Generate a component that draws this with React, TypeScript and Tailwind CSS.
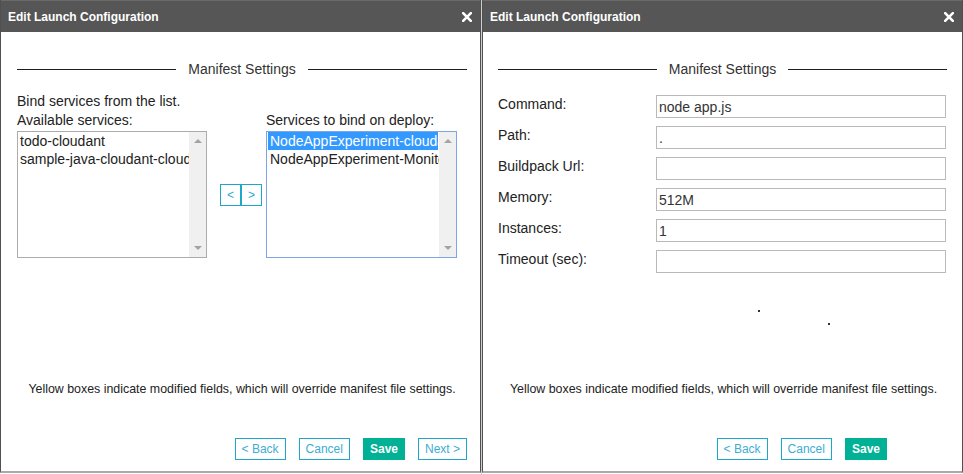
import type { ReactNode } from 'react'

const font = "font-['Liberation_Sans',Arial,sans-serif]"

function CloseIcon() {
  return (
    <svg width="10" height="10" viewBox="0 0 10 10" className="shrink-0">
      <path d="M1.2 1.2 L8.8 8.8 M8.8 1.2 L1.2 8.8" stroke="#fff" strokeWidth="2.6" strokeLinecap="square" />
    </svg>
  )
}

function Dialog({ children, bodyClass }: { children: ReactNode; bodyClass: string }) {
  return (
    <div className="relative flex h-[473px] w-[481px] shrink-0 flex-col border-x border-b-2 border-x-[#505050] border-b-[#a9a9a9] bg-white">
      <div className="flex h-[32px] shrink-0 items-center justify-between border-t border-[#6a6a6a] bg-[#565656] pl-[7px] pr-[8px]">
        <span className="text-[12px] font-bold text-white">Edit Launch Configuration</span>
        <CloseIcon />
      </div>
      <div className={`flex flex-1 flex-col ${bodyClass}`}>{children}</div>
    </div>
  )
}

function Legend({ className = '' }: { className?: string }) {
  return (
    <div className={`mt-[29px] flex h-4 items-center ${className}`}>
      <div className="h-px flex-1 bg-[#1e1e1e]" />
      <span className="px-[12px] text-[14px] leading-4 text-[#333]">Manifest Settings</span>
      <div className="h-px flex-1 bg-[#1e1e1e]" />
    </div>
  )
}

function ScrollTrack() {
  return (
    <div className="flex w-[17px] shrink-0 flex-col items-center justify-between bg-[#f0f0f0] py-[7px]">
      <span className="h-0 w-0 border-x-[4px] border-b-[4px] border-x-transparent border-b-[#a3a3a3]" />
      <span className="h-0 w-0 border-x-[4px] border-t-[4px] border-x-transparent border-t-[#a3a3a3]" />
    </div>
  )
}

function ListBox({ items, focused, width }: { items: string[]; focused?: boolean; width: string }) {
  return (
    <div
      className={`flex h-[127px] ${width} shrink-0 border ${focused ? 'border-[#7da4e6]' : 'border-[#acacac]'} bg-white`}
    >
      <div className={`min-w-0 flex-1 overflow-hidden ${focused ? 'px-[1px]' : ''}`}>
        {items.map((it, i) => (
          <div
            key={it}
            className={`whitespace-nowrap pl-[2px] text-[14px] leading-[18px] ${
              focused && i === 0 ? 'bg-[#3399ff] text-white' : 'text-[#222]'
            }`}
          >
            {it}
          </div>
        ))}
      </div>
      <ScrollTrack />
    </div>
  )
}

function ArrowButton({ label }: { label: string }) {
  return (
    <button className="flex h-[22px] w-[21px] items-center justify-center border border-[#1ea6cb] bg-white text-[12px] text-[#2aaad0]">
      {label}
    </button>
  )
}

function Footer({ showNext, gap }: { showNext: boolean; gap: string }) {
  const outline =
    'flex h-[22px] items-center border border-[#1ea6cb] bg-white px-[6px] text-[12px] text-[#3aaed3]'
  return (
    <>
      <p className={`${gap} text-center text-[12.4px] leading-[14px] text-[#222]`}>
        Yellow boxes indicate modified fields, which will override manifest file settings.
      </p>
      <div className="mt-[42px] flex justify-end gap-[13px]">
        <button className={outline}>&lt; Back</button>
        <button className={outline}>Cancel</button>
        <button className="flex h-[22px] items-center bg-[#00b196] px-[7px] text-[12px] font-bold text-white">
          Save
        </button>
        <button className={`${outline} ${showNext ? '' : 'invisible'}`}>Next &gt;</button>
      </div>
    </>
  )
}

const fields = [
  { label: 'Command:', value: 'node app.js' },
  { label: 'Path:', value: '.' },
  { label: 'Buildpack Url:', value: '' },
  { label: 'Memory:', value: '512M' },
  { label: 'Instances:', value: '1' },
  { label: 'Timeout (sec):', value: '' },
]

export default function App() {
  return (
    <div className={`flex h-[474px] w-[963px] bg-white ${font}`}>
      {/* services step */}
      <Dialog bodyClass="pl-[16px] pr-[13px]">
        <Legend />
        <p className="mt-[16px] text-[14px] leading-4 text-[#222]">Bind services from the list.</p>
        <div className="mt-[3px] flex text-[14px] leading-4 text-[#222]">
          <span className="w-[249px]">Available services:</span>
          <span>Services to bind on deploy:</span>
        </div>
        <div className="mt-[3px] flex items-center">
          <ListBox width="w-[190px]" items={['todo-cloudant', 'sample-java-cloudant-cloudantNoSQLDB']} />
          <div className="ml-[13px] flex">
            <ArrowButton label="<" />
            <ArrowButton label=">" />
          </div>
          <div className="ml-[4px]">
            <ListBox
              focused
              width="w-[191px]"
              items={['NodeAppExperiment-cloudantNoSQLDB', 'NodeAppExperiment-Monitoring']}
            />
          </div>
        </div>
        <Footer showNext gap="mt-[124px]" />
      </Dialog>

      <div className="w-px shrink-0 bg-[#cfcfcf]" />

      {/* manifest step */}
      <Dialog bodyClass="pl-[15px] pr-[13px]">
        <Legend className="mr-[2px]" />
        <div className="mt-[18px] mr-[3px] flex flex-col gap-[8px]">
          {fields.map((f) => (
            <div key={f.label} className="flex items-start">
              <label className="w-[158px] pt-[1px] text-[14px] leading-4 text-[#222]">{f.label}</label>
              <input
                readOnly
                defaultValue={f.value}
                className="h-[23px] flex-1 border border-[#b9b9b9] bg-white pl-[2px] text-[14px] text-[#333] outline-none"
              />
            </div>
          ))}
        </div>
        <Footer showNext={false} gap="mt-[109px]" />
        <span className="absolute left-[275px] top-[310px] h-[2px] w-[2px] bg-[#333]" />
        <span className="absolute left-[345px] top-[323px] h-[2px] w-[2px] bg-[#333]" />
      </Dialog>
    </div>
  )
}
